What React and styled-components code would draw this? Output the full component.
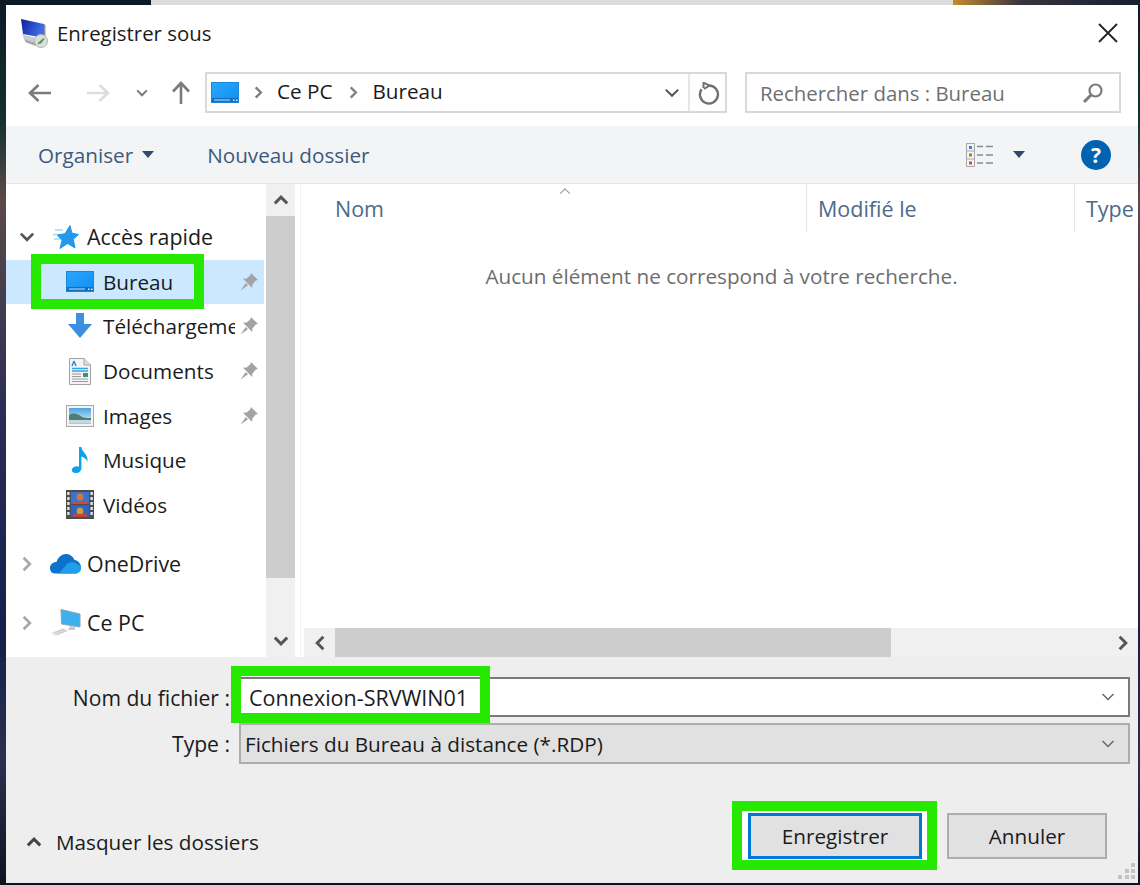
import React from "react";
import styled, { createGlobalStyle } from "styled-components";

const GlobalStyle = createGlobalStyle`
  html, body {
    margin: 0;
    padding: 0;
    height: 885px;
    overflow: hidden;
  }
  body {
    font-family: "Open Sans", "Noto Sans", "Liberation Sans", sans-serif;
    font-size: 20.7px;
    color: #1b1b1b;
  }
  * { box-sizing: border-box; }
`;

const GREEN = "#27e800";

/* ---------- page + window ---------- */

const Desktop = styled.div`
  width: 1140px;
  height: 885px;
  padding: 5px 2px 2px 6px;
  background:
    linear-gradient(90deg, #0d1a26 0, #0d1a26 151px, #dcdcdc 151px, #dcdcdc 953px, #c98a2e 953px, #3a3340 1020px, #15202e 1140px) top / 100% 5px no-repeat,
    linear-gradient(180deg, #0d1a26 0, #14322e 120px, #5a4a48 200px, #2a2c58 420px, #14204a 640px, #2c3050 760px, #0d1420 885px);
`;

const Dialog = styled.div`
  position: relative;
  height: 878px;
  display: flex;
  flex-direction: column;
  background: #fff;
`;

/* ---------- title ---------- */

const TitleBar = styled.div`
  height: 55px;
  flex: none;
  display: flex;
  align-items: center;
  padding: 0 20px 0 13px;
`;

const TitleText = styled.span`
  margin-left: 8px;
  flex: 1;
  font-size: 20.4px;
`;

/* ---------- navigation row ---------- */

const NavRow = styled.div`
  height: 66px;
  flex: none;
  display: flex;
  align-items: flex-start;
  padding: 12px 17px 0 0;
`;

const NavButtons = styled.div`
  width: 199px;
  flex: none;
  height: 41px;
  display: flex;
  align-items: center;
  padding-left: 21px;
`;

const NavSlot = styled.span`
  display: flex;
  margin-left: ${(p) => p.$gap || 0}px;
`;

const AddressBox = styled.div`
  width: 522px;
  height: 41px;
  flex: none;
  border: 2px solid #d9d9d9;
  display: flex;
  align-items: center;
  padding: 0 4px 0 4px;
`;

const AddressText = styled.span`
  padding-bottom: 3px;
`;

const Crumb = styled.span`
  display: flex;
  margin: 0 12px 0 13px;
  &:first-of-type { margin: 0 11px 0 12px; }
`;

const AddressEnd = styled.span`
  margin-left: auto;
  align-self: stretch;
  display: flex;
  align-items: center;
  gap: 7px;
`;

const AddressDivider = styled.span`
  width: 2px;
  align-self: stretch;
  background: #e6e6e6;
`;

const SearchBox = styled.div`
  width: 376px;
  height: 41px;
  flex: none;
  margin-left: 18px;
  border: 2px solid #d9d9d9;
  display: flex;
  align-items: center;
  justify-content: space-between;
  padding: 0 15px 0 13px;
  color: #6f6f6f;
  font-size: 20.4px;
`;

/* ---------- toolbar ---------- */

const Toolbar = styled.div`
  height: 58px;
  flex: none;
  display: flex;
  align-items: center;
  background: #f3f4f6;
  border-bottom: 1px solid #e4e4e4;
  padding: 0 27px 0 32px;
  color: #3d5a7c;
`;

const ToolButton = styled.span`
  display: flex;
  align-items: center;
  gap: 9px;
  margin-right: ${(p) => p.$gap || 0}px;
`;

const ToolbarEnd = styled.span`
  margin-left: auto;
  display: flex;
  align-items: center;
`;

/* ---------- main: tree + list ---------- */

const Main = styled.div`
  flex: 1;
  min-height: 0;
  display: flex;
`;

const Tree = styled.div`
  width: 260px;
  flex: none;
  padding-top: 31px;
  overflow: hidden;
`;

const TreeRow = styled.div`
  position: relative;
  height: 44.6px;
  display: flex;
  align-items: center;
  width: 258px;
  background: ${(p) => (p.$active ? "#cce8ff" : "transparent")};
  margin-top: ${(p) => p.$gap || 0}px;
`;

const Expander = styled.span`
  width: 41px;
  flex: none;
  display: flex;
  justify-content: center;
`;

const RootIcon = styled.span`
  width: 40px;
  flex: none;
  display: flex;
  justify-content: flex-start;
  padding-left: ${(p) => p.$pad || 0}px;
`;

const RootLabel = styled.span`
  font-size: 21.4px;
  padding-bottom: 1px;
`;

const ChildIcon = styled.span`
  width: 37px;
  margin: 0 5px 0 55px;
  flex: none;
  display: flex;
  justify-content: center;
`;

const TreeLabel = styled.span`
  width: 132px;
  flex: none;
  overflow: hidden;
  white-space: nowrap;
`;

const Pin = styled.span`
  margin-left: 4px;
  display: flex;
`;

const VScroll = styled.div`
  width: 29px;
  flex: none;
  display: flex;
  flex-direction: column;
  background: #f0f0f0;
`;

const ScrollEnd = styled.span`
  height: ${(p) => p.$h}px;
  flex: none;
  display: flex;
  align-items: center;
  justify-content: center;
`;

const VThumb = styled.div`
  height: 362px;
  flex: none;
  background: #cdcdcd;
`;

const VSpacer = styled.div`
  flex: 1;
`;

const List = styled.div`
  flex: 1;
  min-width: 0;
  display: flex;
  flex-direction: column;
  margin-left: 5px;
  border-left: 1px solid #f2f2f2;
`;

const ListHead = styled.div`
  position: relative;
  height: 48px;
  flex: none;
  display: flex;
  color: #4d6a8a;
  font-size: 21.5px;
`;

const HeadCell = styled.div`
  width: ${(p) => p.$w}px;
  flex: none;
  padding: 10px 0 0 ${(p) => p.$pad}px;
  white-space: nowrap;
  border-right: ${(p) => (p.$last ? "none" : "1px solid #e5e5e5")};
`;

const SortCaret = styled.span`
  position: absolute;
  left: 257px;
  top: 0;
  display: flex;
`;

const EmptyText = styled.div`
  flex: 1;
  text-align: center;
  color: #6d6d6d;
  padding: 30px 0 0 4px;
`;

const HScroll = styled.div`
  height: 29px;
  flex: none;
  display: flex;
  background: #f0f0f0;
  margin-left: 3px;
`;

const HEnd = styled.span`
  width: 31px;
  flex: none;
  display: flex;
  align-items: center;
  justify-content: center;
`;

const HThumb = styled.div`
  width: 556px;
  flex: none;
  background: #cdcdcd;
`;

const HSpacer = styled.div`
  flex: 1;
`;

/* ---------- bottom pane ---------- */

const BottomPane = styled.div`
  position: relative;
  height: 226px;
  flex: none;
  background: #eeeeee;
  display: flex;
  flex-direction: column;
`;

const FormGrid = styled.div`
  display: grid;
  grid-template-columns: 224px 1fr;
  grid-template-rows: 40px 41px;
  column-gap: 9px;
  row-gap: 6px;
  padding: 20px 8px 0 0;
  align-items: center;
`;

const FieldLabel = styled.label`
  text-align: right;
  font-size: 21.1px;
`;

const Field = styled.div`
  position: relative;
  height: 100%;
  display: flex;
  align-items: center;
  justify-content: space-between;
  padding: 0 12px 0 ${(p) => (p.$select ? 4 : 8)}px;
  border: 2px solid ${(p) => (p.$select ? "#adadad" : "#7a7a7a")};
  background: ${(p) => (p.$select ? "#e1e1e1" : "#fff")};
`;

const FileName = styled.span`
  font-size: 21.5px;
`;

const GreenFrame = styled.span`
  position: absolute;
  left: ${(p) => p.$left}px;
  top: ${(p) => p.$top}px;
  width: ${(p) => p.$w}px;
  height: ${(p) => p.$h}px;
  border: 10px solid ${GREEN};
  pointer-events: none;
`;

const Footer = styled.div`
  margin-top: 37px;
  display: flex;
  align-items: flex-start;
  padding: 0 31px 0 0;
`;

const HideFolders = styled.span`
  display: flex;
  align-items: center;
  gap: 13px;
  margin: 27px auto 0 19px;
`;

const SaveFrame = styled.span`
  display: flex;
  padding: 2px 5px 1px 6px;
  background: #fff;
  border: 10px solid ${GREEN};
`;

const DialogButton = styled.button`
  width: ${(p) => p.$w}px;
  height: 46px;
  font: inherit;
  color: #1b1b1b;
  background: #e1e1e1;
  border: ${(p) => (p.$primary ? "3px solid #0078d7" : "2px solid #adadad")};
  margin-top: ${(p) => p.$top || 0}px;
  margin-left: ${(p) => p.$left || 0}px;
  padding: 0;
`;

const Grip = styled.svg`
  position: absolute;
  right: 3px;
  bottom: 3px;
`;

/* ---------- icons ---------- */

const Chevron = ({ dir = "down", size = 16, color = "#555", w = 2.4 }) => {
  const rot = { down: 0, up: 180, left: 90, right: -90 }[dir];
  return (
    <svg width={size} height={size} viewBox="0 0 16 16" fill="none">
      <path d="M2.5 5 L8 10.5 L13.5 5" stroke={color} strokeWidth={w} transform={`rotate(${rot} 8 8)`} />
    </svg>
  );
};

const Arrow = ({ dir = "left", color = "#7b7b7b" }) => {
  const rot = { left: 0, right: 180, up: 90 }[dir];
  return (
    <svg width="26" height="26" viewBox="0 0 26 26" fill="none">
      <path d="M24 13 H3 M11.5 5 L3 13 L11.5 21" stroke={color} strokeWidth="2.6" transform={`rotate(${rot} 13 13)`} />
    </svg>
  );
};

const Caret = ({ color = "#2f4a6d" }) => (
  <svg width="12" height="7" viewBox="0 0 12 7">
    <path d="M0 0 H12 L6 7 Z" fill={color} />
  </svg>
);

const DesktopIcon = () => (
  <svg width="28" height="21" viewBox="0 0 28 21">
    <defs>
      <linearGradient id="desk" x1="0" y1="0" x2="1" y2="1">
        <stop offset="0" stopColor="#2aa8ff" />
        <stop offset="1" stopColor="#0f8ef0" />
      </linearGradient>
    </defs>
    <rect x="0.5" y="0.5" width="27" height="20" fill="url(#desk)" stroke="#1c86d6" />
    <rect x="1" y="16" width="26" height="4" fill="#0f6fc0" />
    <rect x="3" y="17.5" width="16" height="1" fill="#bfe3ff" />
    <rect x="22" y="17.5" width="1.5" height="1.5" fill="#dff1ff" />
    <rect x="25" y="17.5" width="1.5" height="1.5" fill="#dff1ff" />
  </svg>
);

const RdpIcon = () => (
  <svg width="30" height="30" viewBox="0 0 30 30">
    <defs>
      <linearGradient id="rdp" x1="0" y1="0" x2="1" y2="0.4">
        <stop offset="0" stopColor="#101f9c" />
        <stop offset="1" stopColor="#3f6fe6" />
      </linearGradient>
    </defs>
    <path d="M2 1 L25 6 V20 L4 16 Z" fill="url(#rdp)" />
    <path d="M25 6 L26.5 7 V21 L25 20 Z" fill="#8d93a8" />
    <path d="M3 16 L5 21 L17 25 V20 Z" fill="#c9ccd2" />
    <path d="M5 21 L17 25 V28 L7 24.5 Z" fill="#a4a7ae" />
    <circle cx="22" cy="23" r="6.5" fill="#dcdedf" stroke="#b0b3b7" />
    <path d="M19 26 L21.6 23.5 L21.2 25.2 L25 20.5" stroke="#45a83a" strokeWidth="1.7" fill="none" />
  </svg>
);

const StarIcon = () => (
  <svg width="27" height="25" viewBox="0 0 27 25">
    <path d="M18 0.5 L20 8.2 L26.5 9.5 L21.3 14.3 L23 23 L15.5 18.5 L8 23.5 L10 15.2 L5 10 L13 8.7 Z" fill="#2498ea" stroke="#2498ea" strokeLinejoin="round" />
    <path d="M3 5 H11 M1 9.5 H6 M2 14 H8" stroke="#a5d6f7" strokeWidth="1.4" />
  </svg>
);

const DownloadIcon = () => (
  <svg width="26" height="26" viewBox="0 0 26 26">
    <path d="M9 0 H17 V11 H25 L13 25 L1 11 H9 Z" fill="#3d8fe0" />
  </svg>
);

const DocumentIcon = () => (
  <svg width="22" height="27" viewBox="0 0 22 27">
    <path d="M0.5 0.5 H15 L21.5 7 V26.5 H0.5 Z" fill="#f4f4f4" stroke="#a2a2a2" />
    <path d="M15 0.5 V7 H21.5" fill="#dcdcdc" stroke="#a2a2a2" />
    <path d="M5 3 L3 8 M5 3 L7 8" stroke="#1f8fe0" strokeWidth="1.4" />
    <path d="M3 10.5 H19 M3 13 H19" stroke="#35a2ea" strokeWidth="1.3" />
    <path d="M3 16 H12 M3 18.5 H12 M3 21 H19 M3 23.5 H19" stroke="#9a9a9a" />
    <rect x="14" y="15" width="5" height="4" fill="#3f8f7f" />
  </svg>
);

const ImagesIcon = () => (
  <svg width="28" height="22" viewBox="0 0 28 22">
    <defs>
      <linearGradient id="sky" x1="0" y1="0" x2="0" y2="1">
        <stop offset="0" stopColor="#4aa3e0" />
        <stop offset="1" stopColor="#e6f3fb" />
      </linearGradient>
    </defs>
    <rect x="0.5" y="0.5" width="27" height="21" fill="#f4f4f4" stroke="#a9a9a9" />
    <rect x="3" y="3" width="22" height="15.5" fill="url(#sky)" />
    <path d="M3 10 C8 7 12 9 16 12 C19 13 22 13 25 13 V18.5 H3 Z" fill="#4f7f72" />
    <path d="M3 15 H25 V18.5 H3 Z" fill="#c5d9e4" />
  </svg>
);

const MusicIcon = () => (
  <svg width="18" height="27" viewBox="0 0 18 27">
    <path d="M8 0 H10.4 C10.6 5 17.5 7 16.5 15 C15.8 12 13 10.5 10.4 9.5 V21 C10.4 25 6.5 26.5 3.5 26 C0.5 25.4 0 22 2.5 20.3 C4.3 19 6.5 19 8 19.8 Z" fill="#0fa0ee" />
  </svg>
);

const VideoIcon = () => (
  <svg width="28" height="29" viewBox="0 0 28 29">
    <rect x="0" y="0" width="28" height="29" fill="#4c4c4c" />
    <rect x="5" y="2" width="18" height="12" fill="#3a74d0" />
    <rect x="5" y="15" width="18" height="12" fill="#2f63c4" />
    <circle cx="14" cy="7" r="3.4" fill="#d2783c" />
    <circle cx="14" cy="21" r="3.4" fill="#c9a13a" />
    <rect x="7" y="11" width="14" height="3" fill="#c74c3a" />
    <rect x="7" y="24" width="14" height="3" fill="#c5443a" />
    {[2, 7, 12, 17, 22].map((y) => (
      <g key={y}>
        <rect x="1.2" y={y} width="2.4" height="3" fill="#e4e4e4" />
        <rect x="24.4" y={y} width="2.4" height="3" fill="#e4e4e4" />
      </g>
    ))}
  </svg>
);

const CloudIcon = () => (
  <svg width="31" height="20" viewBox="0 0 31 20">
    <path d="M5 19.5 C1.5 19.5 0 16.5 0 14 C0 10.5 3 8 6.5 8 C8 3 12 0 16 0 C20 0 23 2.5 24.5 6 C28 6.5 31 9.5 31 13.5 C31 17 28.5 19.5 25 19.5 Z" fill="#0c72cc" />
    <path d="M9 19.5 L17 10 C20 7.5 24 8 27 10 C29.5 11 31 12 31 13.5 C31 17 28.5 19.5 25 19.5 Z" fill="#1f9fe8" />
  </svg>
);

const ComputerIcon = () => (
  <svg width="32" height="27" viewBox="0 0 32 27">
    <path d="M11 0.5 L30 5 V18 L11.5 15 Z" fill="#3fb0ee" stroke="#8aa4b6" />
    <path d="M20 17 L25 18 V21 H18 Z" fill="#c3c9ce" />
    <path d="M1 24 L14 19 L18 22 L6 27 Z" fill="#dfe2e5" />
    <path d="M5 23.5 L14 20.5 M7 25 L16 22" stroke="#c2c6ca" />
  </svg>
);

const PinIcon = () => (
  <svg width="20" height="20" viewBox="0 0 20 20">
    <path d="M12 1 L19 8 L16.8 8.6 L13.4 12.4 L13.2 16 L4 6.8 L7.6 6.6 L11.4 3.2 Z M6.8 11 L9 13.2 L1.5 18.5 Z" fill="#a3a3a3" />
  </svg>
);

const RefreshIcon = () => (
  <svg width="24" height="24" viewBox="0 0 24 24" fill="none">
    <path d="M12 4.5 A9 9 0 1 1 4.6 8.3" stroke="#707070" strokeWidth="2.4" />
    <path d="M6.5 1 V7 M6.5 1.6 L12.5 4.5 L7 8" stroke="#707070" strokeWidth="2" />
  </svg>
);

const SearchIcon = () => (
  <svg width="22" height="22" viewBox="0 0 22 22" fill="none">
    <circle cx="13.5" cy="8.5" r="6" stroke="#7a7a7a" strokeWidth="2.2" />
    <path d="M9 13 L2 20" stroke="#7a7a7a" strokeWidth="3" />
  </svg>
);

const ViewIcon = () => (
  <svg width="28" height="24" viewBox="0 0 28 24" fill="none">
    <rect x="0.5" y="0.5" width="8" height="23" fill="#f4f4f4" stroke="#a8a8a8" />
    <path d="M0.5 8 H8.5 M0.5 16 H8.5" stroke="#a8a8a8" />
    <rect x="3" y="3" width="3" height="3" fill="#3a7fd0" />
    <rect x="3" y="10.5" width="3" height="3" fill="#8f8a3a" />
    <rect x="3" y="18.5" width="3" height="3" fill="#d0503a" />
    <path d="M11 3.5 H17 M20 3.5 H27 M11 12 H17 M20 12 H27 M11 20 H17 M20 20 H27" stroke="#8a8a8a" strokeWidth="1.5" />
  </svg>
);

const HelpIcon = styled.span`
  width: 30px;
  height: 30px;
  border-radius: 50%;
  background: #0063b1;
  color: #fff;
  font-weight: 700;
  font-size: 21px;
  display: flex;
  align-items: center;
  justify-content: center;
  margin-left: 56px;
`;

const CloseIcon = () => (
  <svg width="20" height="20" viewBox="0 0 20 20" fill="none">
    <path d="M1 1 L19 19 M19 1 L1 19" stroke="#222" strokeWidth="1.8" />
  </svg>
);

const quickAccess = [
  { label: "Bureau", icon: <DesktopIcon />, pinned: true, active: true },
  { label: "Téléchargements", icon: <DownloadIcon />, pinned: true },
  { label: "Documents", icon: <DocumentIcon />, pinned: true },
  { label: "Images", icon: <ImagesIcon />, pinned: true },
  { label: "Musique", icon: <MusicIcon /> },
  { label: "Vidéos", icon: <VideoIcon /> },
];

export default function App() {
  return (
    <>
      <GlobalStyle />
      <Desktop>
        <Dialog>
          <TitleBar>
            <RdpIcon />
            <TitleText>Enregistrer sous</TitleText>
            <CloseIcon />
          </TitleBar>

          <NavRow>
            <NavButtons>
              <NavSlot><Arrow dir="left" /></NavSlot>
              <NavSlot $gap={32}><Arrow dir="right" color="#dddddd" /></NavSlot>
              <NavSlot $gap={24}><Chevron size={14} color="#7b7b7b" /></NavSlot>
              <NavSlot $gap={19}><Arrow dir="up" /></NavSlot>
            </NavButtons>
            <AddressBox>
              <DesktopIcon />
              <Crumb><Chevron dir="right" size={15} color="#808080" w={2.6} /></Crumb>
              <AddressText>Ce PC</AddressText>
              <Crumb><Chevron dir="right" size={15} color="#808080" w={2.6} /></Crumb>
              <AddressText>Bureau</AddressText>
              <AddressEnd>
                <Chevron size={18} color="#555" w={1.8} />
                <AddressDivider />
                <RefreshIcon />
              </AddressEnd>
            </AddressBox>
            <SearchBox>
              <span>Rechercher dans : Bureau</span>
              <SearchIcon />
            </SearchBox>
          </NavRow>

          <Toolbar>
            <ToolButton $gap={53}>Organiser <Caret /></ToolButton>
            <ToolButton>Nouveau dossier</ToolButton>
            <ToolbarEnd>
              <ViewIcon />
              <NavSlot $gap={19}><Caret /></NavSlot>
              <HelpIcon>?</HelpIcon>
            </ToolbarEnd>
          </Toolbar>

          <Main>
            <Tree>
              <TreeRow>
                <Expander><Chevron color="#555" size={18} /></Expander>
                <RootIcon $pad={5}><StarIcon /></RootIcon>
                <RootLabel>Accès rapide</RootLabel>
              </TreeRow>
              {quickAccess.map((item) => (
                <TreeRow key={item.label} $active={item.active}>
                  <ChildIcon>{item.icon}</ChildIcon>
                  <TreeLabel>{item.label}</TreeLabel>
                  {item.pinned && <Pin><PinIcon /></Pin>}
                  {item.active && <GreenFrame $left={25} $top={-6} $w={173} $h={55} />}
                </TreeRow>
              ))}
              <TreeRow $gap={14.4}>
                <Expander><Chevron dir="right" color="#a8a8a8" size={18} /></Expander>
                <RootIcon $pad={3}><CloudIcon /></RootIcon>
                <RootLabel>OneDrive</RootLabel>
              </TreeRow>
              <TreeRow $gap={14.4}>
                <Expander><Chevron dir="right" color="#a8a8a8" size={18} /></Expander>
                <RootIcon $pad={3}><ComputerIcon /></RootIcon>
                <RootLabel>Ce PC</RootLabel>
              </TreeRow>
            </Tree>

            <VScroll>
              <ScrollEnd $h={32}><Chevron dir="up" size={18} color="#555" w={2.6} /></ScrollEnd>
              <VThumb />
              <VSpacer />
              <ScrollEnd $h={32}><Chevron size={18} color="#555" w={2.6} /></ScrollEnd>
            </VScroll>

            <List>
              <ListHead>
                <SortCaret>
                  <Chevron dir="up" size={14} color="#9a9a9a" w={1.2} />
                </SortCaret>
                <HeadCell $w={506} $pad={34}>Nom</HeadCell>
                <HeadCell $w={268} $pad={11}>Modifié le</HeadCell>
                <HeadCell $w={60} $pad={11} $last>Type</HeadCell>
              </ListHead>
              <EmptyText>Aucun élément ne correspond à votre recherche.</EmptyText>
              <HScroll>
                <HEnd><Chevron dir="left" size={18} color="#555" w={2.6} /></HEnd>
                <HThumb />
                <HSpacer />
                <HEnd><Chevron dir="right" size={18} color="#555" w={2.6} /></HEnd>
              </HScroll>
            </List>
          </Main>

          <BottomPane>
            <FormGrid>
              <FieldLabel>Nom du fichier :</FieldLabel>
              <Field>
                <FileName>Connexion-SRVWIN01</FileName>
                <Chevron size={16} color="#666" w={1.5} />
                <GreenFrame $left={-10} $top={-13} $w={259} $h={57} />
              </Field>
              <FieldLabel>Type :</FieldLabel>
              <Field $select>
                <span>Fichiers du Bureau à distance (*.RDP)</span>
                <Chevron size={16} color="#666" w={1.5} />
              </Field>
            </FormGrid>
            <Footer>
              <HideFolders>
                <Chevron dir="up" size={18} color="#444" w={2.6} />
                Masquer les dossiers
              </HideFolders>
              <SaveFrame>
                <DialogButton $primary $w={174}>Enregistrer</DialogButton>
              </SaveFrame>
              <DialogButton $w={160} $top={12} $left={10}>Annuler</DialogButton>
            </Footer>
            <Grip width="17" height="17" viewBox="0 0 17 17">
              {[[13, 0], [7, 6], [13, 6], [0, 12], [7, 12], [13, 12]].map(([x, y]) => (
                <rect key={`${x}-${y}`} x={x} y={y} width="4" height="4" fill="#c4c4c4" />
              ))}
            </Grip>
          </BottomPane>
        </Dialog>
      </Desktop>
    </>
  );
}
